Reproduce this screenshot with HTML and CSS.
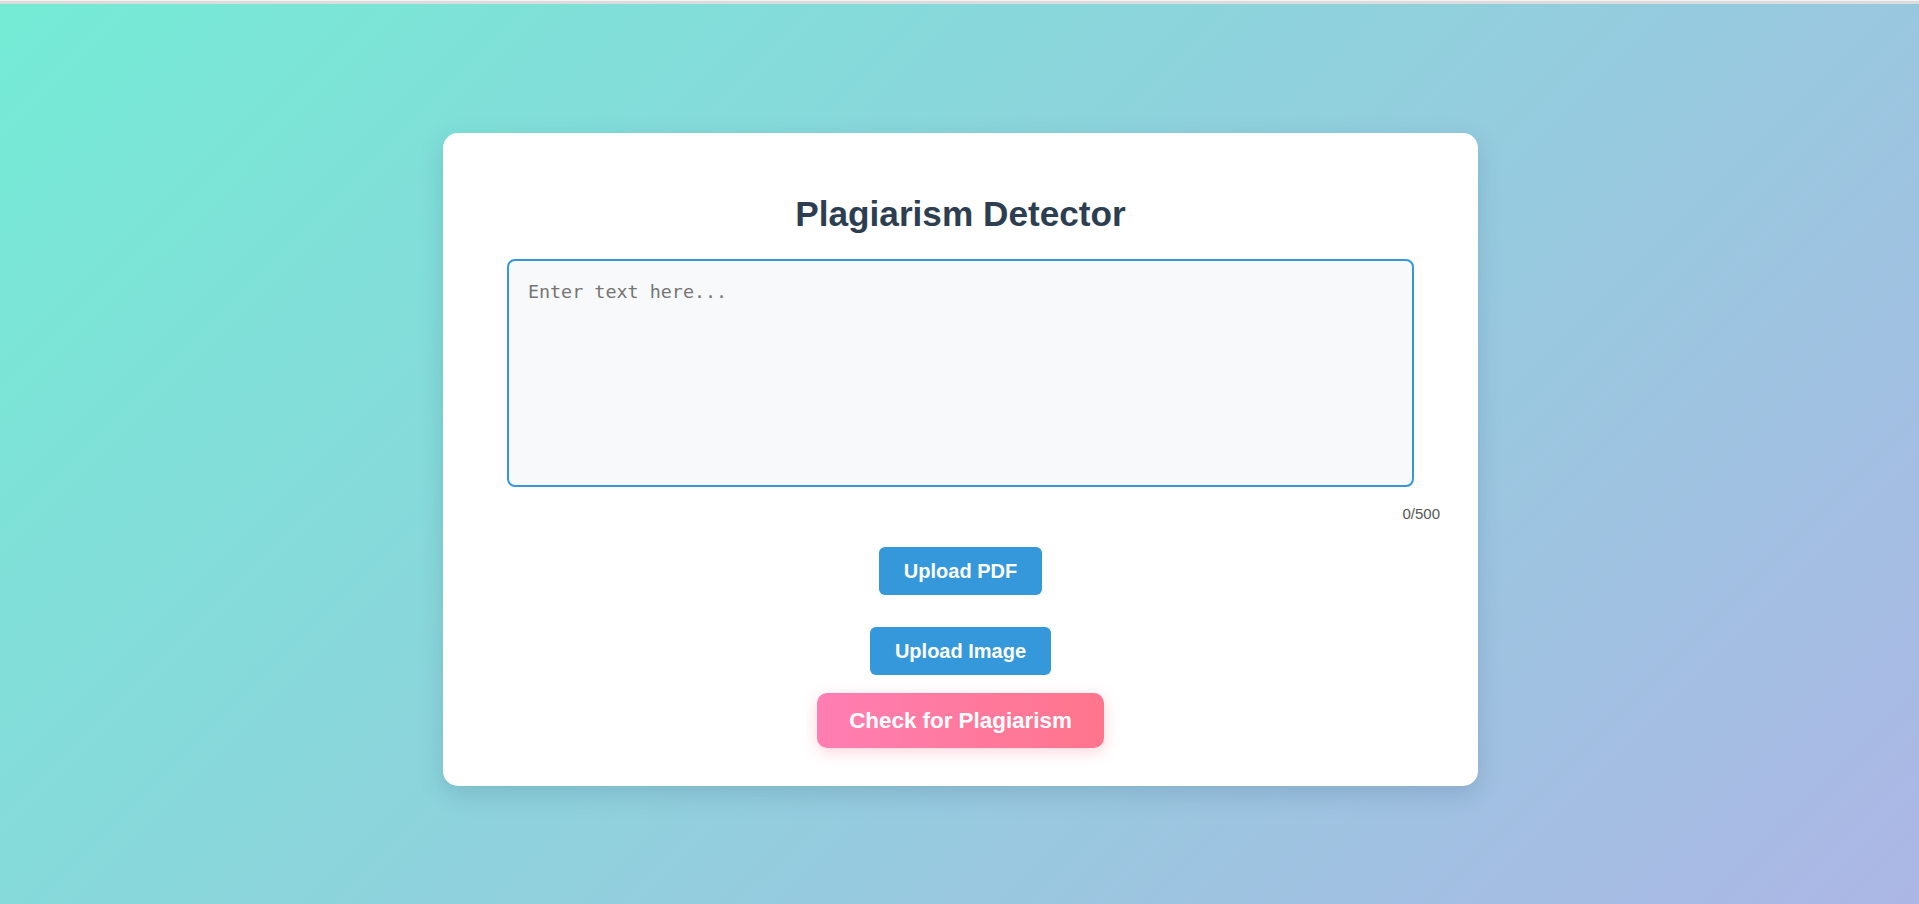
FILE: index.html
```html
<!DOCTYPE html>
<html lang="en">
<head>
<meta charset="utf-8">
<title>Plagiarism Detector</title>
<link rel="stylesheet" href="styles.css">
</head>
<body>
<div class="topbar"></div>
<main class="page">
  <section class="card">
    <h1 class="title">Plagiarism Detector</h1>
    <textarea class="input" placeholder="Enter text here..."></textarea>
    <div class="counter">0/500</div>
    <div class="actions">
      <button class="btn btn-upload btn-pdf" type="button">Upload PDF</button>
      <button class="btn btn-upload btn-image" type="button">Upload Image</button>
      <button class="btn btn-check" type="button">Check for Plagiarism</button>
    </div>
  </section>
</main>
</body>
</html>
```

FILE: styles.css
```css
html, body {
  margin: 0;
  padding: 0;
}

body {
  min-height: 904px;
  height: 100vh;
  background: linear-gradient(135deg, #74ebd5 0%, #acb6e5 100%);
  font-family: "Liberation Sans", Arial, sans-serif;
  box-sizing: border-box;
  overflow: hidden;
}

.topbar {
  height: 4px;
  background: linear-gradient(180deg, #f2f2f2 0%, #f2f2f2 30%, #dcdcdc 31%, #dcdcdc 100%);
}

.page {
  display: flex;
  justify-content: center;
  padding-top: 129px;
  padding-left: 2px;
}

.card {
  width: 1035px;
  box-sizing: border-box;
  background: #ffffff;
  border-radius: 15px;
  padding: 40px 40px 38px 40px;
  box-shadow: 0 8px 24px rgba(40, 70, 110, 0.18);
  display: flex;
  flex-direction: column;
}

.title {
  margin: 21px 0 25px;
  font-size: 35.2px;
  line-height: 40px;
  font-weight: 700;
  color: #2c3e50;
  text-align: center;
}

.input {
  display: block;
  width: 95%;
  margin: 0 auto;
  height: 228px;
  box-sizing: border-box;
  padding: 20px 20px 20px 19px;
  border: 2px solid #3498db;
  border-radius: 8px;
  background: #f8f9fa;
  font-family: "DejaVu Sans Mono", "Liberation Mono", monospace;
  font-size: 18.4px;
  color: #333;
  resize: none;
  outline: none;
}

.input::placeholder {
  color: #757575;
}

.counter {
  margin: 18px -2px 0 0;
  font-size: 15px;
  line-height: 17px;
  color: #555;
  text-align: right;
}

.actions {
  display: flex;
  flex-direction: column;
  align-items: center;
}

.btn {
  border: none;
  color: #ffffff;
  font-family: "Liberation Sans", Arial, sans-serif;
  font-weight: 700;
  cursor: pointer;
}

.btn-upload {
  background: #3498db;
  font-size: 20px;
  line-height: 24px;
  padding: 12px 25px;
  border-radius: 6px;
}

.btn-pdf {
  margin-top: 25px;
}

.btn-image {
  margin-top: 32px;
}

.btn-check {
  margin-top: 18px;
  background: linear-gradient(90deg, #ff7eb3 0%, #ff758c 100%);
  font-size: 22.4px;
  line-height: 25px;
  padding: 15px 32px;
  border-radius: 10px;
  box-shadow: 0 4px 15px rgba(255, 117, 140, 0.3);
}
```
